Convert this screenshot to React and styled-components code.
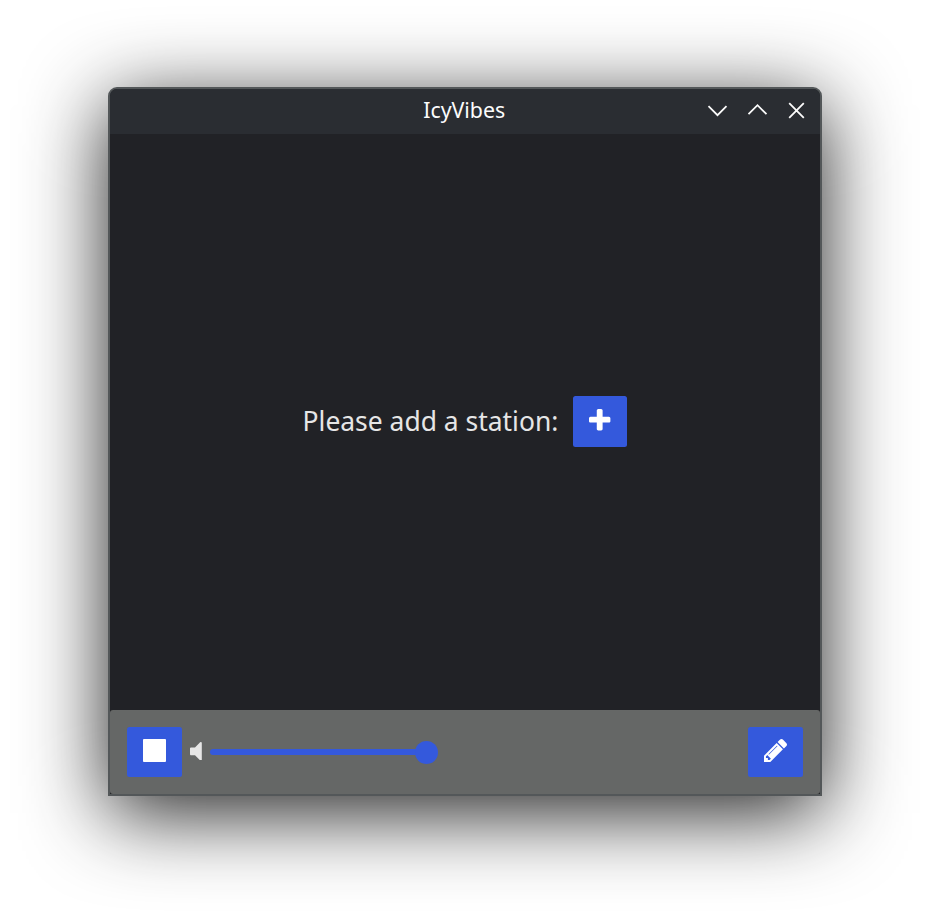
import React from 'react';
import styled, { createGlobalStyle } from 'styled-components';

const GlobalStyle = createGlobalStyle`
  * { box-sizing: border-box; }
  body {
    margin: 0;
    background: #fff;
    font-family: "Noto Sans", "Open Sans", sans-serif;
    overflow: hidden;
  }
`;

const Desktop = styled.div`
  height: 923px;
  padding: 87px 107px 0 108px;
  overflow: hidden;
`;

const Window = styled.main`
  display: flex;
  flex-direction: column;
  width: 714px;
  height: 709px;
  border: 2px solid #535759;
  border-radius: 9px 9px 0 0;
  background: #212226;
  box-shadow: 0 17px 82px rgba(0, 0, 0, 0.87);
`;

const TitleBar = styled.header`
  display: grid;
  grid-template-columns: 1fr auto 1fr;
  align-items: center;
  height: 45px;
  flex: none;
  padding: 0 12.6px 2px 12px;
  border-radius: 7px 7px 0 0;
  background: #2a2d32;
`;

const Title = styled.h1`
  grid-column: 2;
  margin: -2px 0 0 -1px;
  font-size: 21.33px;
  font-weight: 400;
  line-height: 30px;
  color: #fcfcfc;
`;

const WindowControls = styled.div`
  display: flex;
  justify-content: flex-end;
  gap: 18.5px;
`;

const ControlButton = styled.button`
  display: flex;
  padding: 0;
  border: 0;
  background: none;
  color: #fcfcfc;
`;

const LineIcon = styled.svg`
  display: block;
  width: 21px;
  height: 21px;
  fill: none;
  stroke: currentColor;
  stroke-width: 1.8;
`;

const Content = styled.section`
  display: flex;
  align-items: center;
  justify-content: center;
  gap: 14.5px;
  flex: 1;
  padding: 0 0.6px 1px 0;
`;

const Prompt = styled.span`
  padding-bottom: 1px;
  font-size: 26.45px;
  line-height: 36px;
  white-space: nowrap;
  color: #e6e6e6;
`;

const ActionButton = styled.button`
  display: flex;
  align-items: center;
  justify-content: center;
  flex: none;
  width: ${({ $width }) => $width}px;
  height: ${({ $height = 50 }) => $height}px;
  padding: 0 0 3px;
  border: 0;
  border-radius: 2.5px;
  background: #3459dc;
  color: #fff;
`;

const Glyph = styled.svg`
  display: block;
  flex: none;
  width: ${({ $w }) => $w}px;
  height: ${({ $h }) => $h}px;
  fill: currentColor;
`;

const PlayerBar = styled.footer`
  display: flex;
  align-items: center;
  height: 84px;
  flex: none;
  padding: 0 17px 0 16.5px;
  border-radius: 3px;
  background: #656766;
`;

const Volume = styled.div`
  display: flex;
  align-items: center;
  gap: 8px;
  margin: 0 auto 0 8.3px;
  color: #e6e6e6;
`;

const SpeakerGlyph = styled(Glyph)`
  margin-bottom: 2px;
`;

const Slider = styled.div`
  display: flex;
  align-items: center;
  justify-content: flex-end;
  width: 228px;
  height: 23px;
`;

const Track = styled.div`
  flex: 1;
  height: 6px;
  margin-right: -3px;
  border-radius: 3px;
  background: #3459dc;
`;

const Thumb = styled.div`
  width: 23px;
  height: 23px;
  border-radius: 50%;
  background: #3459dc;
`;

export default function App() {
  return (
    <>
      <GlobalStyle />
      <Desktop>
        <Window>
          <TitleBar>
            <Title>IcyVibes</Title>
            <WindowControls>
              <ControlButton aria-label="Minimize">
                <LineIcon viewBox="0 0 21 21"><path d="M1.5 6.2 10.5 15.2 19.5 6.2" /></LineIcon>
              </ControlButton>
              <ControlButton aria-label="Maximize">
                <LineIcon viewBox="0 0 21 21"><path d="M1.5 14.2 10.5 5.2 19.5 14.2" /></LineIcon>
              </ControlButton>
              <ControlButton aria-label="Close">
                <LineIcon viewBox="0 0 21 21"><path d="M3.2 3.2 17.8 17.8M17.8 3.2 3.2 17.8" /></LineIcon>
              </ControlButton>
            </WindowControls>
          </TitleBar>
          <Content>
            <Prompt>Please add a station:</Prompt>
            <ActionButton $width={54} $height={51} aria-label="Add station">
              <Glyph $w={21.4} $h={21.4} viewBox="192 128 1408 1408">
                <path d="M1600 736v192q0 40-28 68t-68 28h-416v416q0 40-28 68t-68 28h-192q-40 0-68-28t-28-68v-416h-416q-40 0-68-28t-28-68v-192q0-40 28-68t68-28h416v-416q0-40 28-68t68-28h192q40 0 68 28t28 68v416h416q40 0 68 28t28 68z" />
              </Glyph>
            </ActionButton>
          </Content>
          <PlayerBar>
            <ActionButton $width={55.3} aria-label="Stop">
              <Glyph $w={23} $h={23} viewBox="0 0 23 23"><rect width="23" height="23" rx="0.9" /></Glyph>
            </ActionButton>
            <Volume>
              <SpeakerGlyph $w={11.8} $h={18.7} viewBox="512 288 768 1216">
                <path d="M1280 352v1088q0 26-19 45t-45 19-45-19l-333-333h-262q-26 0-45-19t-19-45v-384q0-26 19-45t45-19h262l333-333q19-19 45-19t45 19 19 45z" />
              </SpeakerGlyph>
              <Slider role="slider" aria-label="Volume" aria-valuenow={100}>
                <Track />
                <Thumb />
              </Slider>
            </Volume>
            <ActionButton $width={55.3} aria-label="Edit stations">
              <Glyph $w={23} $h={23} viewBox="128 149 1515 1515">
                <path d="M491 1536l91-91-235-235-91 91v107h128v128h107zm523-928q0-22-22-22-10 0-17 7l-542 542q-7 7-7 17 0 22 22 22 10 0 17-7l542-542q7-7 7-17zm-54-192l416 416-832 832h-416v-416zm683 96q0 53-37 90l-166 166-416-416 166-165q36-38 90-38 53 0 91 38l235 234q37 39 37 91z" />
              </Glyph>
            </ActionButton>
          </PlayerBar>
        </Window>
      </Desktop>
    </>
  );
}
